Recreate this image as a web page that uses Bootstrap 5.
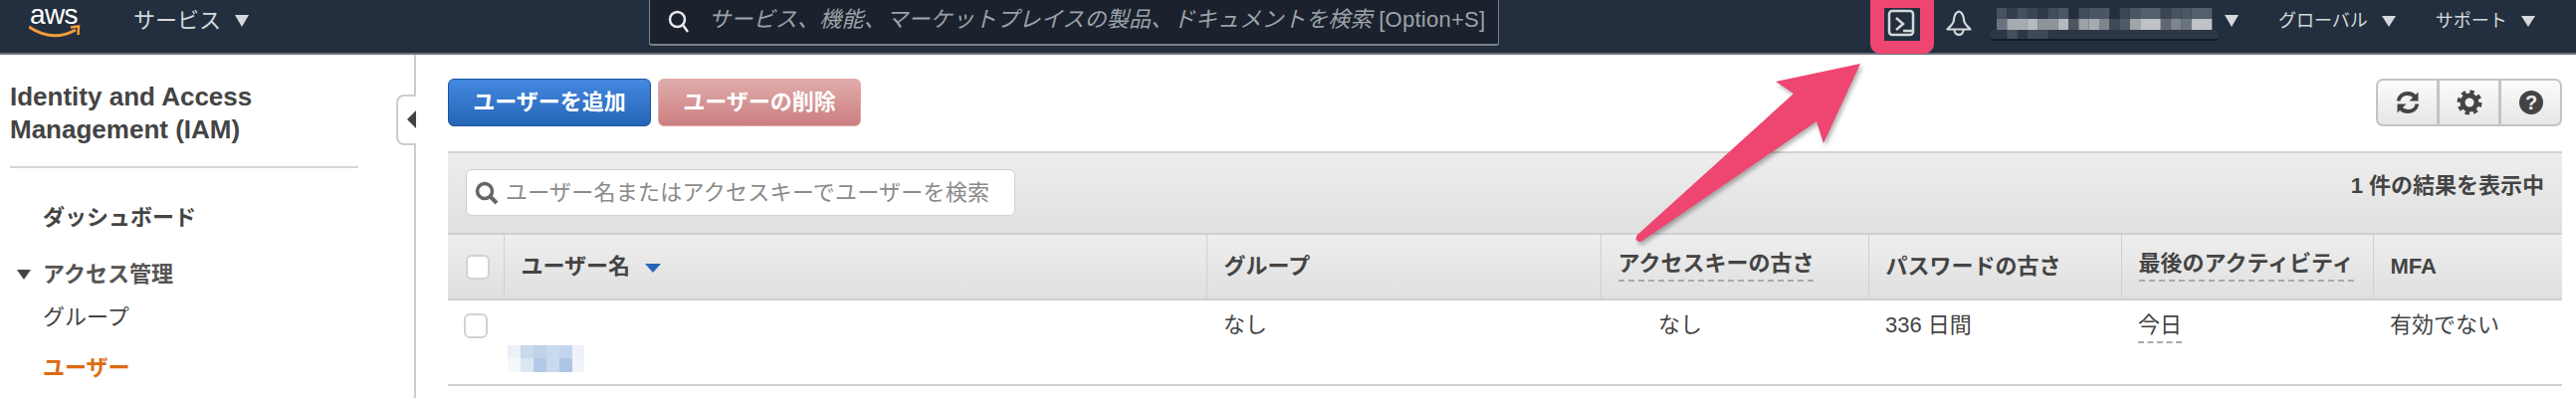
<!DOCTYPE html>
<html lang="ja">
<head>
<meta charset="utf-8">
<title>IAM ユーザー</title>
<link href="https://cdn.jsdelivr.net/npm/bootstrap@5.3.0/dist/css/bootstrap.min.css" rel="stylesheet">
<style>
html,body{height:400px;overflow:hidden}
body{position:relative;font-family:"Liberation Sans","Noto Sans CJK JP",sans-serif;font-size:22px;color:#444;background:#fff;line-height:24px}
.topbar{height:55px;background:#232f3e;border-bottom:2px solid #6a727c;color:#d5d9db}
.logo-wrap{margin-left:29px;width:52px;height:42px;position:relative}
.logo-text{display:block;font-size:28px;line-height:24px;color:#fff;margin-top:3px;padding-left:1px;letter-spacing:-.6px}
.logo-wrap svg{display:block;margin-top:-3px}
.nav-item-top{height:42px}
.tri-down{width:0;height:0;border-left:7.5px solid transparent;border-right:7.5px solid transparent;border-top:12px solid #d5d9db;margin-left:14px}
.tri-sm{border-left-width:7px;border-right-width:7px;border-top-width:11px}
.svc{margin-left:53px}
.top-search{margin-left:402px;width:854px;height:46px;background:#1b222d;border:1px solid #59626d;border-top:0;border-bottom-width:2px;border-color:#7a828a;border-radius:0 0 3px 3px;padding-left:18px}
.top-ph{margin-left:19px;font-style:italic;color:#9ba3a8;white-space:nowrap;padding-bottom:4px;letter-spacing:.25px}
.top-ph-latin{font-style:normal}
.shell-hi{margin-left:373px;width:64px;height:54px;background:#ee4670;border-radius:0 0 10px 10px;padding-top:8px}
.shell-box{display:block;width:36px;height:33px;background:#232f3e;margin-left:14px}
.bell{margin-left:12px;margin-top:9px}
.blurname{margin-top:7px;width:228px;height:34px;margin-right:-7px;margin-left:19px}
.global{font-size:18px;margin-left:0}
.g1{margin-left:40px}
.g2{margin-left:40px}
.sidepane{width:418px;height:345px;border-right:2px solid #ccc;flex:none;position:relative}
.side-inner{padding:26px 0 0 10px}
.side-title{font-size:26px;line-height:33px;font-weight:700;color:#444;margin:0;width:350px}
.side-rule{width:350px;height:2px;background:#d5d5d5;margin:20px 0 0}
.side-dash{margin:38px 0 0 33px;font-weight:700}
.side-group{margin:33px 0 0 7px;font-weight:700;color:#555}
.tri-nav{border-left:7.5px solid transparent;border-right:7.5px solid transparent;border-top:10px solid #444;margin-right:12px}
.side-link{margin:19px 0 0 33px;color:#444}
.side-cur{margin:27px 0 0 33px;color:#dd6b10;font-weight:700}
.collapse-tab{position:absolute;left:398px;top:40px;width:20px;height:51px;background:#fff;border:2px solid #ccc;border-right:0;border-radius:8px 0 0 8px}
.collapse-tab i{position:absolute;right:0;top:14px;border-top:9px solid transparent;border-bottom:9px solid transparent;border-right:9px solid #444}
.mainpane{padding:24px 14px 0 32px;width:2170px;flex:none}
.action-btn{width:204px;height:48px;border-radius:6px;color:#fff;font-weight:700;font-size:22px;line-height:24px;padding:0;border-width:1px;border-style:solid}
.add-btn{background:linear-gradient(#4488e0,#2465b6);border-color:#1f5499}
.add-btn:hover{color:#fff;background:linear-gradient(#4488e0,#2465b6);border-color:#1f5499}
.del-btn{background:linear-gradient(#e0abab,#cb7f7f);border-color:#e3a9a9;margin-left:7px}
.tool-btn{width:62px;height:48px;padding:0;background:linear-gradient(#fbfbfb,#e6e6e6);border:2px solid #c4c4c4;border-radius:7px;line-height:0}
.tool-btn svg{display:block;margin:auto}
.tool-group{width:187px}
.panel-top{margin-top:25px;height:82px;border-top:2px solid #d2d2d2;background:linear-gradient(#eeeeee,#e0e0e0);padding:16px 18px 0 18px}
.user-search{width:552px;height:47px;background:#fff;border:1px solid #cfcfcf;border-radius:6px;padding-left:8px;color:#8a8a8a;white-space:nowrap;letter-spacing:.25px}
.user-search svg{flex:none;margin-right:7px}
.count{font-weight:700;color:#444;padding-top:0;margin-top:5px}
.user-table{table-layout:fixed;width:2124px;margin:0;--bs-table-bg:transparent;color:#444}
.user-table th{height:66px;padding:0 0 0 17px;background:linear-gradient(#eeeeee,#dfdfdf);border-top:2px solid #d0d0d0;border-left:1px solid #d0d0d0;border-bottom:2px solid #d0d0d0;vertical-align:middle;font-weight:700;white-space:nowrap}
.user-table th:first-child{border-left:0;padding:0 0 0 18px}
.user-table td{height:86px;padding:13px 0 0 17px;vertical-align:top;border-bottom:2px solid #d0d0d0;white-space:nowrap}
.user-table td:first-child{padding:13px 0 0 16px}
.w-a{width:56px}.w-b{width:706px}.w-c{width:396px}.w-d{width:269px}.w-e{width:254px}.w-f{width:253px}.w-g{width:190px}
.cb{display:block;width:24px;height:25px;background:#fff;border:2px solid #d2d2d2;border-radius:6px}
.dash-u{display:inline-block;border-bottom:2px dashed #aaa;padding-bottom:4px}
.sort-tri{display:inline-block;border-left:8px solid transparent;border-right:8px solid transparent;border-top:9px solid #2465b6;margin-left:15px;vertical-align:1px}
.nashi{padding-left:41px}
.bluruser{display:block;margin-top:7px;margin-left:-13px}
.pointer{position:absolute;left:0;top:0;pointer-events:none;filter:drop-shadow(2px 3px 2px rgba(0,0,0,.3))}
.fuzz{filter:blur(.7px)}
</style>
</head>
<body>
<nav class="topbar d-flex align-items-start">
  <div class="logo-wrap">
    <span class="logo-text">aws</span>
    <svg width="56" height="18" viewBox="0 0 56 18"><path d="M0 3Q24 19 47 6" fill="none" stroke="#f29d38" stroke-width="3"/><path d="M42 3.500L50 2.500L49.500 11" fill="none" stroke="#f29d38" stroke-width="2.500"/></svg>
  </div>
  <div class="nav-item-top svc d-flex align-items-center">サービス<span class="tri-down"></span></div>
  <div class="top-search d-flex align-items-center">
    <svg width="22" height="24" viewBox="0 0 22 24"><circle cx="9.500" cy="9.500" r="7.500" fill="none" stroke="#e6e8ea" stroke-width="2.500"/><path d="M15 15L20 22" stroke="#e6e8ea" stroke-width="2.500"/></svg>
    <span class="top-ph">サービス、機能、マーケットプレイスの製品、ドキュメントを検索 <span class="top-ph-latin">[Option+S]</span></span>
  </div>
  <div class="shell-hi">
    <span class="shell-box">
      <svg width="36" height="33" viewBox="0 0 36 33"><rect x="5" y="3" width="24" height="24" rx="3" fill="none" stroke="#d5d9db" stroke-width="2.500"/><path d="M12 10L19 16L12 22" fill="none" stroke="#d5d9db" stroke-width="2.500"/><path d="M19 23H28" stroke="#d5d9db" stroke-width="2.500"/></svg>
    </span>
  </div>
  <svg class="bell" width="26" height="28" viewBox="0 0 26 28"><path d="M13 2.500C7.500 4 8.500 10 7.500 13C6.500 16 3.500 18 1.500 20.500H24.500C22.500 18 19.500 16 18.500 13C17.500 10 18.500 4 13 2.500Z" fill="none" stroke="#d5d9db" stroke-width="2.200" stroke-linejoin="round"/><path d="M8.500 21C8.500 27.500 17.500 27.500 17.500 21" fill="none" stroke="#d5d9db" stroke-width="2.200"/></svg>
  <svg class="blurname fuzz" viewBox="0 0 228 34">
    <g>
      <rect x="6" y="1" width="10.300" height="11" fill="#46525f"/><rect x="16.300" y="1" width="10.300" height="11" fill="#323c4a"/><rect x="26.600" y="1" width="10.300" height="11" fill="#465160"/><rect x="36.900" y="1" width="10.300" height="11" fill="#3a4452"/><rect x="47.200" y="1" width="10.300" height="11" fill="#2f3948"/><rect x="57.500" y="1" width="10.300" height="11" fill="#424d5a"/><rect x="67.800" y="1" width="10.300" height="11" fill="#4b5663"/><rect x="88.400" y="1" width="10.300" height="11" fill="#414c5a"/><rect x="98.700" y="1" width="20.600" height="11" fill="#4b5663"/><rect x="129.600" y="1" width="10.300" height="11" fill="#3b4553"/><rect x="139.900" y="1" width="10.300" height="11" fill="#4b5663"/><rect x="150.200" y="1" width="20.600" height="11" fill="#545f6b"/><rect x="170.800" y="1" width="10.300" height="11" fill="#3b4553"/><rect x="181.100" y="1" width="10.300" height="11" fill="#49535f"/><rect x="191.400" y="1" width="10.300" height="11" fill="#4b5663"/><rect x="201.700" y="1" width="20.600" height="11" fill="#545f6b"/>
      <rect x="6" y="12" width="10.300" height="11" fill="#6a7480"/><rect x="16.300" y="12" width="20.600" height="11" fill="#a6abb1"/><rect x="36.900" y="12" width="10.300" height="11" fill="#b5b9bd"/><rect x="47.200" y="12" width="20.600" height="11" fill="#8e949b"/><rect x="67.800" y="12" width="10.300" height="11" fill="#b5b9bd"/><rect x="78.100" y="12" width="10.300" height="11" fill="#4c5663"/><rect x="88.400" y="12" width="10.300" height="11" fill="#9da2a8"/><rect x="98.700" y="12" width="10.300" height="11" fill="#a6abb1"/><rect x="109" y="12" width="10.300" height="11" fill="#7e858d"/><rect x="119.300" y="12" width="10.300" height="11" fill="#3f4a58"/><rect x="129.600" y="12" width="10.300" height="11" fill="#515b68"/><rect x="139.900" y="12" width="10.300" height="11" fill="#a0a5ab"/><rect x="150.200" y="12" width="20.600" height="11" fill="#c0c3c6"/><rect x="170.800" y="12" width="10.300" height="11" fill="#5e6773"/><rect x="181.100" y="12" width="10.300" height="11" fill="#7e858d"/><rect x="191.400" y="12" width="10.300" height="11" fill="#6a7480"/><rect x="201.700" y="12" width="20.600" height="11" fill="#c0c3c6"/>
      <rect x="0" y="23" width="228" height="9" fill="#2d3745"/><rect x="16.300" y="23" width="10.300" height="9" fill="#46505e"/><rect x="36.900" y="23" width="20.600" height="9" fill="#3f4957"/>
      <rect x="0" y="32" width="228" height="2" fill="#141c27"/>
    </g>
  </svg>
  <div class="nav-item-top d-flex align-items-center"><span class="tri-down"></span></div>
  <div class="nav-item-top global g1 d-flex align-items-center">グローバル<span class="tri-down tri-sm"></span></div>
  <div class="nav-item-top global g2 d-flex align-items-center">サポート<span class="tri-down tri-sm"></span></div>
</nav>

<div class="d-flex">
  <aside class="sidepane">
    <div class="side-inner">
      <h1 class="side-title">Identity and Access Management (IAM)</h1>
      <div class="side-rule"></div>
      <div class="side-dash">ダッシュボード</div>
      <div class="side-group d-flex align-items-center"><span class="tri-nav"></span>アクセス管理</div>
      <div class="side-link">グループ</div>
      <div class="side-cur">ユーザー</div>
    </div>
    <div class="collapse-tab"><i></i></div>
  </aside>

  <main class="mainpane">
    <div class="d-flex justify-content-between">
      <div class="d-flex">
        <button type="button" class="btn action-btn add-btn">ユーザーを追加</button>
        <button type="button" class="btn action-btn del-btn">ユーザーの削除</button>
      </div>
      <div class="btn-group tool-group" role="group">
        <button type="button" class="btn tool-btn" aria-label="更新"><svg width="26" height="26" viewBox="0 0 26 26"><path d="M3.500 11.500C4.500 6.500 8.500 4 13 4C16.500 4 19 5.500 20.500 7.500" fill="none" stroke="#444" stroke-width="3.800"/><path d="M23.500 2.500V11.500H14.500Z" fill="#444"/><path d="M22.500 14.500C21.500 19.500 17.500 22 13 22C9.500 22 7 20.500 5.500 18.500" fill="none" stroke="#444" stroke-width="3.800"/><path d="M2.500 23.500V14.500H11.500Z" fill="#444"/></svg></button>
        <button type="button" class="btn tool-btn" aria-label="設定"><svg width="26" height="26" viewBox="0 0 26 26"><circle cx="13" cy="13" r="7" fill="none" stroke="#444" stroke-width="5"/><circle cx="13" cy="13" r="10.500" fill="none" stroke="#444" stroke-width="4" stroke-dasharray="4.250 4"/></svg></button>
        <button type="button" class="btn tool-btn" aria-label="ヘルプ"><svg width="26" height="26" viewBox="0 0 26 26"><circle cx="13" cy="13" r="12" fill="#444"/><text x="13" y="20" text-anchor="middle" font-family="Liberation Sans" font-weight="700" font-size="20" fill="#eee">?</text></svg></button>
      </div>
    </div>
    <div class="panel-top d-flex justify-content-between align-items-start">
      <div class="user-search d-flex align-items-center">
        <svg width="24" height="24" viewBox="0 0 24 24"><circle cx="10" cy="10" r="7.500" fill="none" stroke="#666" stroke-width="3.500"/><path d="M15.500 15.500L22 22" stroke="#666" stroke-width="4"/></svg>
        ユーザー名またはアクセスキーでユーザーを検索
      </div>
      <div class="count">1 件の結果を表示中</div>
    </div>
    <table class="table user-table">
      <colgroup><col class="w-a"><col class="w-b"><col class="w-c"><col class="w-d"><col class="w-e"><col class="w-f"><col class="w-g"></colgroup>
      <thead>
        <tr>
          <th><span class="cb"></span></th>
          <th>ユーザー名<span class="sort-tri"></span></th>
          <th>グループ</th>
          <th><span class="dash-u">アクセスキーの古さ</span></th>
          <th>パスワードの古さ</th>
          <th><span class="dash-u">最後のアクティビティ</span></th>
          <th>MFA</th>
        </tr>
      </thead>
      <tbody>
        <tr>
          <td><span class="cb"></span></td>
          <td>&nbsp;
            <svg class="bluruser fuzz" width="84" height="30" viewBox="0 0 84 30"><rect x="0" y="1" width="13" height="13" fill="#ecf1f8"/><rect x="13" y="1" width="13" height="13" fill="#c9d9ee"/><rect x="26" y="1" width="13" height="13" fill="#bfd2ea"/><rect x="39" y="1" width="13" height="13" fill="#c9d9ee"/><rect x="52" y="1" width="13" height="13" fill="#c3d5ec"/><rect x="65" y="1" width="12" height="13" fill="#eef2f8"/><rect x="0" y="14" width="13" height="14" fill="#f4f7fb"/><rect x="13" y="14" width="13" height="14" fill="#dbe6f3"/><rect x="26" y="14" width="13" height="14" fill="#b3cae6"/><rect x="39" y="14" width="13" height="14" fill="#c9d9ee"/><rect x="52" y="14" width="13" height="14" fill="#aec6e4"/><rect x="65" y="14" width="12" height="14" fill="#f0f4f9"/></svg>
          </td>
          <td>なし</td>
          <td><span class="nashi">なし</span></td>
          <td>336 日間</td>
          <td><span class="dash-u">今日</span></td>
          <td>有効でない</td>
        </tr>
      </tbody>
    </table>
  </main>
</div>

<svg class="pointer" width="2588" height="400" viewBox="0 0 2588 400"><path d="M1869 64L1784 82L1802 94L1645 236Q1642 241 1645 242Q1647 244 1650 242L1825 122L1832 144Z" fill="#ee4670"/></svg>
<script src="https://cdn.jsdelivr.net/npm/bootstrap@5.3.0/dist/js/bootstrap.bundle.min.js"></script>
</body>
</html>
